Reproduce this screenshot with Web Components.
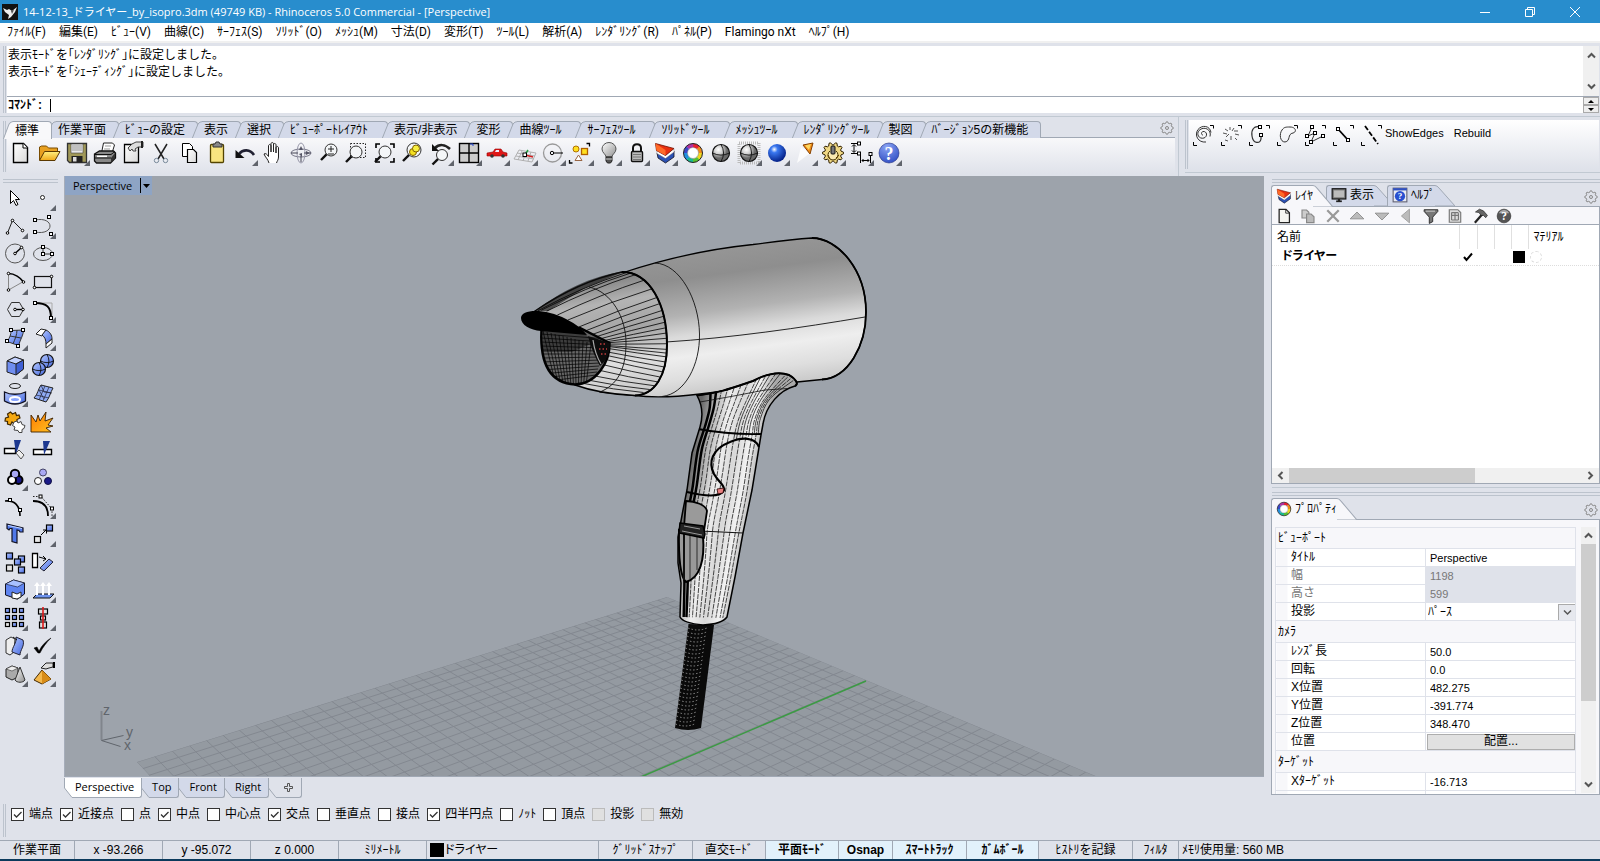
<!DOCTYPE html>
<html lang="ja">
<head>
<meta charset="utf-8">
<title>14-12-13_ドライヤー_by_isopro.3dm - Rhinoceros 5.0 Commercial</title>
<style>
  html, body { margin: 0; height: 100%; }
  body {
    --bg: #dfe2ea; --edge: #a0a8b4; --soft: #c1c9d2; --tab: #d3d9e9; --face: #f7f7fa;
    --ui: "Open Sans", "Noto Sans CJK JP", sans-serif;
    --jp: "Liberation Sans", "Noto Sans CJK JP", sans-serif;
    background: var(--bg); color: #000; font: 12px/16px "Noto Sans CJK JP", "Liberation Sans", sans-serif;
  }
</style>
</head>
<body>
<rh-app></rh-app>
<script>
const BASE = `<style>
  *, *::before, *::after { box-sizing: border-box; }
  :host { display: block; }
  button, input, select { font: inherit; color: inherit; margin: 0; padding: 0; border: 0; border-radius: 0; background: none; outline: 0; }
  button { display: inline-flex; align-items: center; justify-content: center; white-space: nowrap; }
  a { color: inherit; text-decoration: none; }
  svg { display: block; }
</style>`;
function define(name, html, ready) {
  const tpl = document.createElement('template');
  customElements.define(name, class extends HTMLElement {
    connectedCallback() {
      if (this.shadowRoot) return;
      tpl.innerHTML = BASE + (typeof html === 'function' ? html(this) : html);
      this.attachShadow({ mode: 'open' }).append(tpl.content.cloneNode(true));
      if (ready) ready(this.shadowRoot, this);
    }
  });
}

/* ---------- icons, drawn on a 28 x 28 cell ---------- */
const DEFS = `<defs>
  <linearGradient id="doc" x2="1" y2="1"><stop stop-color="#fff"/><stop offset="1" stop-color="#d8d8d8"/></linearGradient>
  <linearGradient id="gold" x2="0" y2="1"><stop stop-color="#fff080"/><stop offset="1" stop-color="#f0a818"/></linearGradient>
  <linearGradient id="blue" x2="1" y2="1"><stop stop-color="#b4c8ff"/><stop offset="1" stop-color="#4468e0"/></linearGradient>
  <linearGradient id="grey" x2="1" y2="1"><stop stop-color="#fff"/><stop offset="1" stop-color="#909090"/></linearGradient>
  <linearGradient id="fire" x2="1" y2="1"><stop stop-color="#ff7a00"/><stop offset="1" stop-color="#ffc020"/></linearGradient>
  <radialGradient id="ball" cx=".35" cy=".3"><stop stop-color="#fff"/><stop offset=".5" stop-color="#d0d0d0"/><stop offset="1" stop-color="#686868"/></radialGradient>
  <radialGradient id="bball" cx=".35" cy=".3" r=".75"><stop stop-color="#fff"/><stop offset=".25" stop-color="#3a78f0"/><stop offset="1" stop-color="#001a80"/></radialGradient>
  <radialGradient id="help" cx=".4" cy=".2" r=".9"><stop stop-color="#8aa4f4"/><stop offset="1" stop-color="#2a48c0"/></radialGradient>
</defs>`;
const sq = (x, y, f = '#fff') => `<rect x="${x - 1.5}" y="${y - 1.5}" width="3" height="3" fill="${f}" stroke="#000"/>`;
const dot = (x, y) => `<circle cx="${x}" cy="${y}" r="1.3" fill="#fff" stroke="#000"/>`;
const box = (x, y, w, f = 'url(#blue)', h = w) => `<rect x="${x}" y="${y}" width="${w}" height="${h}" fill="${f}" stroke="#000" stroke-width="1.2"/>`;
const corners = `<path d="M21 5.500h3.500v3M4.500 22v3.500h3.500" stroke="#000" fill="none"/>`;
const lens = (x, y, r) => `<path d="M${x - r * .7} ${y + r * .7}L${x - r - 4} ${y + r + 4}" stroke="#111" stroke-width="2.4"/><circle cx="${x}" cy="${y}" r="${r}" fill="#f4f6f8" stroke="#333"/>`;
const wheel = (cx, cy, r, w) => ['#e8202c', '#f08c1c', '#f0d820', '#58c030', '#18b890', '#2090e0', '#3a48c8', '#b030a0'].map((c, i) => {
  const a = i * Math.PI / 4 - 1.57, b = a + .82;
  return `<path d="M${cx + r * Math.cos(a)} ${cy + r * Math.sin(a)}A${r} ${r} 0 0 1 ${cx + r * Math.cos(b)} ${cy + r * Math.sin(b)}" fill="none" stroke="${c}" stroke-width="${w}"/>`;
}).join('') + `<circle cx="${cx}" cy="${cy}" r="${r + w / 2}" fill="none" stroke="#222"/><circle cx="${cx}" cy="${cy}" r="${r - w / 2}" fill="#fff" stroke="#555" stroke-width=".4"/>`;
const sphere = (x, y, r, f) => `<circle cx="${x}" cy="${y}" r="${r}" fill="${f}" stroke="#111" stroke-width="1.2"/><path d="M${x - r} ${y}q${r} ${r * .5} ${2 * r} 0M${x} ${y - r}q${r * .6} ${r} 0 ${2 * r}" fill="none" stroke="#111" stroke-width=".9"/>`;
const cog = (x, y, r, n, f, s) => {
  let d = '';
  for (let i = 0; i < n * 4; i++) { const a = (i - .5) * Math.PI / (n * 2), R = i % 4 < 2 ? r : r * .78; d += (i ? 'L' : 'M') + (x + R * Math.cos(a)).toFixed(1) + ' ' + (y + R * Math.sin(a)).toFixed(1); }
  return `<path d="${d}Z" fill="${f}" stroke="${s}"/>`;
};
const ICONS = {
  new: `<path d="M6.500 4.500h10l4 4v15h-14z" fill="url(#doc)" stroke="#000" stroke-width="1.400"/><path d="M16 4.500v4.500h4.500" fill="#fff" stroke="#000"/>`,
  open: `<path d="M4.500 21v-13l2-1h5l2 2h9v3" fill="#e8a020" stroke="#7a4c00"/><path d="M4.500 21.500l5-9h15.500l-5 9z" fill="url(#gold)" stroke="#5a3800"/>`,
  save: `<path d="M4.500 4.500h19v19h-17l-2-2z" fill="#a09858" stroke="#333" stroke-width="1.300"/><path d="M8 5h12v9h-12z" fill="#e8e8e8" stroke="#444" stroke-width=".6"/><path d="M9 7h10M9 9h10M9 11h10" stroke="#999"/><path d="M8.500 17h11v6.500h-11z" fill="#222"/><path d="M10 18h3.500v4.500h-3.500z" fill="#ddd"/>`,
  print: `<path d="M10.500 14l2-10h9l2 2-2.500 8z" fill="#fff" stroke="#222"/><path d="M14 7l6 0M13 10l6 0" stroke="#999"/><path d="M3.500 15l5-3h14l2 2v5l-5 5h-14l-2-2z" fill="#888" stroke="#111" stroke-width="1.300"/><path d="M4 15.500h16l4-3M4 19h16" stroke="#111" fill="none"/><path d="M6 17.300h10" stroke="#fff" stroke-width="1.500"/><path d="M20 19v4l4-4v-5z" fill="#333"/>`,
  props: `<path d="M5.500 5.500h14v18h-14z" fill="url(#doc)" stroke="#000" stroke-width="1.300"/><path d="M9 9l4-4 4-2h7v5l-5 0-3 2 1 2-3 0-1-2-2 2z" fill="#ddd" stroke="#444"/><path d="M22 2v7h2v-7z" fill="#222"/>`,
  cut: `<path d="M8 5l9 15M20 5l-9 15" stroke="#222" stroke-width="1.500"/><circle cx="9.500" cy="21.500" r="2.200" fill="none" stroke="#789"/><circle cx="18.500" cy="21.500" r="2.200" fill="none" stroke="#789"/>`,
  copy: `<path d="M7.500 4.500h7l3 3v10h-10z" fill="#fff" stroke="#000"/><path d="M12.500 10.500h6l3 3v10h-9z" fill="url(#doc)" stroke="#000" stroke-width="1.200"/>`,
  paste: `<rect x="7.500" y="5.500" width="13" height="18" rx="1" fill="#f8e480" stroke="#544400" stroke-width="1.300"/><path d="M10 8v-3h2l1-2h3l1 2h2v3z" fill="#888" stroke="#333"/>`,
  undo: `<path d="M8 15c4-5 11-5 15 1" fill="none" stroke="#223" stroke-width="2.600"/><path d="M4.500 11v8h9z" fill="#111"/>`,
  pan: `<path d="M10 24c-1-4-4-6-5-9 1.500-1 3 0 4.500 2.500V7c0-2 2.500-2 2.500 0v6-8c0-2 2.500-2 2.500 0v8-7c0-2 2.500-2 2.500 0v8-5c0-2 2.500-2 2.500 0v9c0 3-1.500 4-2 6" fill="#fff" stroke="#222"/>`,
  rotate: `<ellipse cx="14" cy="14" rx="10" ry="4" fill="none" stroke="#778"/><ellipse cx="14" cy="14" rx="4" ry="10" fill="none" stroke="#99a"/><path d="M4 14h7M17 14h7M14 17v6" stroke="#445"/><path d="M12 11l2-4 2 4zM12 15l3-1 0 4zM19 12l4 2-4 2z" fill="#556"/>`,
  zoom: lens(16, 11, 6) + `<path d="M13 10h6M16 7v6M13 15h6" stroke="#222"/>`,
  zoomwin: `<rect x="7.500" y="4.500" width="15" height="14" fill="none" stroke="#222" stroke-dasharray="1.500 1.500"/>` + lens(13, 13, 6),
  zoomext: `<path d="M5 9V5h4M19 5h4v4M23 19v4h-4M9 23H5v-4" fill="none" stroke="#000" stroke-width="1.600"/>` + lens(14, 13, 6),
  zoomsel: lens(15, 11, 7) + `<circle cx="14" cy="13" r="3.500" fill="#f4e020" stroke="#806000"/><circle cx="17" cy="9.500" r="3.500" fill="#f8f040" stroke="#806000"/>`,
  undoview: lens(15, 16, 5.5) + `<path d="M8 9c4-4 10-4 15 1" fill="none" stroke="#222" stroke-width="2.500"/><path d="M5 5v7h7z" fill="#111"/>`,
  views: `<rect x="4.500" y="4.500" width="19" height="19" fill="#ccc" stroke="#000" stroke-width="1.400"/><path d="M14 4v20M4 14h20" stroke="#000" stroke-width="1.400"/><path d="M15 5h3v2" stroke="#24c" fill="none"/>`,
  car: `<path d="M4 14l6-1 2-3h6l2 3 4 1v3H4z" fill="#e01818" stroke="#900" stroke-width=".6"/><path d="M12 13l1-2h3v2z" fill="#eef"/><circle cx="9" cy="17" r="1.800" fill="#333"/><circle cx="20" cy="17" r="1.800" fill="#333"/>`,
  cplane: `<path d="M3 20l5-9 17 3-4 9zM7 21l4-9M12 22l3-9M17 22l3-9M5 17l18 3M6 14l18 3" fill="none" stroke="#aaa" stroke-width=".9"/><path d="M14 16l8 2" stroke="#d02020" stroke-width="1.500"/><path d="M14 16l3-5" stroke="#20a040" stroke-width="1.500"/><rect x="12" y="14" width="3.500" height="3.500" fill="#fff" stroke="#000"/>`,
  circ: `<circle cx="13.500" cy="14" r="9" fill="none" stroke="#999" stroke-width="1.300"/><circle cx="13" cy="14" r="1.700" fill="none" stroke="#000"/><path d="M15 14h9" stroke="#000"/>`,
  shapes: `<circle cx="9" cy="10" r="3" fill="#ffe020" stroke="#b07000"/><rect x="14.500" y="9.500" width="6" height="6" fill="#ffe020" stroke="#b06000" stroke-width="1.300"/><path d="M11.500 16l3.500 5.500H8z" fill="#fff" stroke="#964"/><path d="M19.500 4.500h3v3M2.500 21v3h3" stroke="#000" fill="none" stroke-width="1.300"/>`,
  bulb: `<path d="M11 18c0-3-4-4-4-8a7 6.500 0 0 1 14 0c0 4-4 5-4 8z" fill="url(#grey)" stroke="#555"/><path d="M11 18h6v4l-1.500 2h-3L11 22z" fill="#555" stroke="#222"/><path d="M11 20h6" stroke="#ccc"/>`,
  lock: `<path d="M10 14V9c0-5 8-5 8 0v5" fill="none" stroke="#111" stroke-width="2"/><rect x="8.500" y="12.500" width="11" height="10" rx="1" fill="#bbb" stroke="#111" stroke-width="1.400"/><path d="M10 15.500h8M10 18h8M10 20.500h8" stroke="#777"/>`,
  layers: `<path d="M6 14l8.500 5L23 12v6l-8.500 6-7.500-5z" fill="#2c52b4" stroke="#112" stroke-width=".8"/><path d="M5.500 11.500l9 5 8.500-7v3.500l-8.500 6.500-8.500-5z" fill="#fff" stroke="#667" stroke-width=".4"/><path d="M4.500 4.500L23 9.500l-8.500 7-9-5z" fill="#e83010" stroke="#701000" stroke-width=".8"/><path d="M4.500 4.500l10 6.500v5.500l-9-5z" fill="#ff6a28"/>`,
  wheel: wheel(14, 14, 7.5, 4),
  shade: sphere(14, 14, 8.500, 'url(#ball)'),
  shadesel: `<rect x="4" y="4" width="20" height="20" fill="none" stroke="#bbb" stroke-width="3" stroke-dasharray="1 1"/>` + sphere(14, 14, 8.500, 'url(#ball)'),
  render: `<circle cx="14" cy="14" r="9" fill="url(#bball)"/>`,
  spot: `<path d="M6 24l4-16 9 6z" fill="#fff" opacity=".8"/><path d="M12 6l10-2-3 11z" fill="#f08c18" stroke="#844000"/><path d="M14 6.500l6-1.500-2 6z" fill="#ffd860"/>`,
  gear: cog(14, 14, 10.5, 10, '#f0d884', '#302000') + `<path d="M11 12a5 5 0 1 0 6 0" fill="#f8e8b0" stroke="#403000"/><rect x="12" y="7" width="4" height="8" rx="1" fill="#777" stroke="#111"/><path d="M9 16l2 4M17 19l3-3" stroke="#604000"/>`,
  dims: `<path d="M4 4.500h9M4 14.500h6M7 6v7M13.500 14v10M23.500 14v10M15 21.500h7M5 7.500l2-2 2 2M5 11.500l2 2 2-2M16.500 20l-1.500 1.500 1.500 1.500M20.500 20l1.500 1.500-1.500 1.500" fill="none" stroke="#000"/>` + sq(12, 4.5) + sq(12, 14.5) + sq(23.5, 15),
  help: `<circle cx="14" cy="14" r="10" fill="url(#help)" stroke="#1c2c80" stroke-width=".6"/><text x="14" y="20.500" text-anchor="middle" font-family="Liberation Serif" font-weight="700" font-size="18" fill="#fff">?</text>`,

  spiral: `<path d="M14 15c-2 0-2-3 0-3.500 4-.5 5 5 1 6.500-5 1.500-8-4-5-7.500 5-5 13-1 11 6M17 22c-8 1-12-7-8-12.500 4-5 12-4 13 3" fill="none" stroke="#333"/>` + corners,
  points: `<path d="M6 13l4 1M8 9l3 2M13 7v3M17 8l-2 3M21 11l-4 0M22 15l-4-1M12 14l-3 3M14 16l0 4M18 18l2 2M8 20l3 1" stroke="#555" fill="none"/>` + corners,
  ccurve: `<path d="M15 7c-6-2-9 3-8 9 1 8 8 8 9 3V15" fill="none" stroke="#333" stroke-width="1.200"/>` + sq(15, 7) + sq(16, 15) + corners,
  closed: `<path d="M17 7c6 0 7 5 3 6-6 1-2 8-8 9-5 0-6-8-3-12 2-3 4-3 8-3z" fill="none" stroke="#333"/>` + corners,
  pline: `<path d="M11 7l-4 9 7-3-4 9 12-6" fill="none" stroke="#333"/>` + sq(11, 7) + sq(6, 16) + sq(14, 13) + sq(22, 16) + sq(10, 22) + corners,
  seg: `<path d="M9 9l10 11" stroke="#000" stroke-width="1.800"/>` + sq(9, 9) + sq(19, 20) + corners,
  dash: `<path d="M8 6l13 18" stroke="#000" stroke-width="1.800" stroke-dasharray="5 2"/>` + corners,

  arrow: `<path d="M9.500 6.500v13l3-3 2.500 5 2-1-2.500-5h4z" fill="#fff" stroke="#000"/>`,
  point: `<circle cx="13.500" cy="13.500" r="2" fill="#fff" stroke="#222"/>`,
  polyline: `<path d="M6.500 21l5-12.500L21.500 18.500" fill="none" stroke="#222"/>` + dot(6.5, 21) + dot(11.5, 8.5) + dot(21.5, 18.5),
  curve: `<path d="M6 8c20-4 20 16 0 12" fill="none" stroke="#555"/>` + sq(6, 8) + sq(20, 5) + sq(6, 20) + sq(22, 22),
  circle: `<circle cx="14" cy="13.500" r="9.500" fill="none" stroke="#555"/><path d="M14 13.500l6.500-6" stroke="#000" stroke-width="1.400"/>` + dot(14, 13.5) + dot(20.5, 7.5),
  ellipse: `<ellipse cx="14" cy="14" rx="9.500" ry="6.500" fill="none" stroke="#555"/><path d="M14 7v7h9" fill="none" stroke="#333"/>` + sq(14, 7) + sq(14, 14) + sq(23, 14),
  arc: `<path d="M7.500 22V5.500M7.500 22l15-8.500" stroke="#888" fill="none"/><path d="M7.500 5.500c6 0 12 4 15 8.500" fill="none" stroke="#000" stroke-width="1.500"/>` + dot(7.5, 5.5) + dot(22.5, 14) + dot(7.5, 22),
  rect: `<rect x="5.500" y="8.500" width="17" height="11" fill="none" stroke="#111" stroke-width="1.200"/>` + dot(22.5, 8.5) + dot(5.5, 19.5),
  polygon: `<path d="M6.500 13.500l4-7h8l4 7-4 7h-8z" fill="none" stroke="#333"/><path d="M14 13.500h8" stroke="#000" stroke-width="1.400"/>` + dot(14, 13.5) + dot(22, 13.5),
  fillet: `<path d="M6 7h17v16" fill="none" stroke="#aaa"/><path d="M6 7c12 0 16 4 16 15" fill="none" stroke="#000" stroke-width="2"/>` + sq(6, 7) + sq(22, 22),
  srf: `<path d="M10 6.500L22.500 6c0 5-3 9-5 15.500L6 17.500c3-4 4-7 4-11z" fill="url(#blue)" stroke="#333"/><path d="M16 6c0 5-2 9-4 14M9 12l11 2" stroke="#333" fill="none"/>` + sq(10, 6) + sq(22, 6) + sq(6, 17) + sq(17, 22),
  sweep: `<path d="M7 10l5-5 5 1-4 6z" fill="#fff" stroke="#222"/><path d="M13 11l4-5c4 2 6 5 6 9l-6 5c0-4-1-7-4-9z" fill="url(#blue)" stroke="#222"/><path d="M17 20l6-5v4l-6 5z" fill="#fff" stroke="#222"/>`,
  cube: `<path d="M6 9l8-4 8.500 3v9L15 23l-9-3z" fill="#6f8df0" stroke="#222"/><path d="M6 9l9 3 7.500-4L14 5z" fill="#c4d2ff" stroke="#222"/><path d="M15 12l7.500-4v9L15 23z" fill="#3f5fd4" stroke="#222"/>`,
  bool: sphere(18, 9, 6.500, 'url(#blue)') + sphere(10, 17, 6.500, 'url(#blue)'),
  cyl: `<ellipse cx="14" cy="6" rx="5.500" ry="2.500" fill="none" stroke="#222"/><path d="M3.500 12c6 3 15 3 21 0v9c-6 4-15 4-21 0z" fill="url(#blue)" stroke="#112" stroke-width="1.300"/><ellipse cx="14" cy="19.500" rx="5" ry="2.500" fill="#88a4ff" stroke="#fff" stroke-width="2"/>`,
  mesh: `<path d="M12 5l12 3c-3 5-3 9-7 14l-12-4c4-4 4-9 7-13z" fill="#8fabf4" stroke="#222"/><path d="M16 6l-6 14M20 7l-6 14M10 10l12 3M7 15l13 3M12 5l3 7 8 1M10 10l5 9" stroke="#223" stroke-width=".7" fill="none"/>`,
  puzzle: `<path d="M4.500 10l3-1-1-3 3-2 2 2 3-1.500 1 3 2.500-.5 1 3-3 1.500 0 3-3 1-2-1.500-1.500 3-3-1 0-2.500-2.500-.5z" fill="#f4a810" stroke="#402800" stroke-width="1.200"/><path d="M13 14l3-1 1 2 3-1.500 1 3 3 1-1 3-2 1 0 3-3 0-1-2-4-.5 1-3-2.500-1.500z" fill="#fff" stroke="#444"/>`,
  explode: `<path d="M2 24V7l5 7 2-7 2 6 6-9-1 9 8-3-5 7 5 1-7 2 5 4z" fill="url(#fire)" stroke="#3a2000" stroke-width=".9"/>`,
  trim: `<path d="M3.500 12.500h11v5h-11z" fill="#fff" stroke="#000" stroke-width="1.400"/><path d="M13 4h7l-5 14z" fill="#1c3890"/><path d="M15 17l3-3 5 5-3 4z" fill="#eee" stroke="#555"/>`,
  split: `<path d="M4.500 13.500h18v5h-18z" fill="#fff" stroke="#000" stroke-width="1.400"/><path d="M14 5h7l-6 14z" fill="#1c3890"/>`,
  join: `<circle cx="14" cy="10" r="4" fill="#a9a9f4" stroke="#000" stroke-width="2.400"/><circle cx="17.500" cy="16" r="4" fill="#1a1a88" stroke="#000" stroke-width="2"/><circle cx="11" cy="16" r="4" fill="#fff" stroke="#000" stroke-width="2"/><circle cx="14" cy="10" r="3.200" fill="#a9a9f4"/>`,
  unjoin: `<circle cx="14" cy="8.500" r="3.500" fill="#a9a9f4" stroke="#446"/><circle cx="9" cy="17" r="3.500" fill="#fff" stroke="#222"/><circle cx="19" cy="17" r="3.500" fill="#1a1a88" stroke="#114"/>`,
  editpt: `<path d="M4 9c10-1 15 5 15 15" fill="none" stroke="#000" stroke-width="1.600"/>` + sq(9, 8) + sq(19, 18),
  ctrlpt: `<path d="M4 9c10 0 15 5 15 15" fill="none" stroke="#000" stroke-width="1.800"/><path d="M4 4.500h8L23 17v8" fill="none" stroke="#222" stroke-dasharray="1.500 1.500"/>` + sq(11.5, 4.5) + sq(23, 16.5),
  text: `<path d="M6 4l16 4v4l-3 0-1-1.500-2-.5v13l-5-1.500v-13l-2 0-1 1.500-2-1.500z" fill="#5078e8" stroke="#112" stroke-width="1.200"/><path d="M7 5.500l14 3" stroke="#c0d4ff"/>`,
  move: box(5.5, 16.500, 6, '#e8e8e8') + box(17.5, 5, 6) + `<path d="M12 15l5-5M14 10h3.500v3.500" fill="none" stroke="#000"/>`,
  group: box(5.5, 5, 6) + box(17.5, 8, 6) + box(13.5, 11, 6) + box(5.5, 17, 6, '#e4e4e4') + box(17.5, 19, 6),
  orient: `<path d="M3.500 5.500h5v14h-5z" fill="#fff" stroke="#000" stroke-width="1.300"/><path d="M10 9l7 2M14 8l3 3-3 2" fill="none" stroke="#000"/><path d="M11 20l9-9 4 3-9 9z" fill="url(#blue)" stroke="#223"/>`,
  solid: `<path d="M4.500 8l8-4 11 3v11l-7 5-12-4z" fill="#5f84f0" stroke="#112"/><path d="M4.500 8l12 3 7-4-11-3z" fill="#a8c0ff" stroke="#112" stroke-width=".6"/><path d="M11 22v-6l5 2 4-2v5l-4 2z" fill="#fff" stroke="#222"/>`,
  normals: `<path d="M4 22l4-4h17l-4 4z" fill="#6f95f0" stroke="#111"/><path d="M8 19V9M14 19V9M20 19V9" stroke="#fff" stroke-width="2"/><path d="M5 10l3-4 3 4zM11 10l3-4 3 4zM17 10l3-4 3 4z" fill="#fff"/>`,
  array: [0, 1, 2].map(i => [0, 1, 2].map(j => box(4.5 + 7 * i, 4.5 + 7 * j, 4, i == 0 && j == 2 ? '#e4e4e4' : 'url(#blue)')).join('')).join(''),
  align: box(9.5, 5, 9, '#ddd', 5) + box(11.5, 12, 5, '#ddd', 4) + box(10.5, 18, 7, '#ddd', 6) + `<path d="M14 3v22" stroke="#e01818" stroke-width="1.600"/>`,
  bend: `<path d="M5 8l5-3 4 2-1 13-4 3-4-2z" fill="#eee" stroke="#333"/><path d="M15 5l7 3c2 6-3 10-3 15l-8-3c0-5 5-9 4-15z" fill="url(#blue)" stroke="#223"/><path d="M12 5l4 3" stroke="#111"/>`,
  check: `<path d="M5 16l3-1 2 4c3-6 7-10 12-13-5 5-8 9-11 15h-2z" fill="#000" stroke="#000" stroke-width=".5"/>`,
  prims: `<path d="M5 9l6-3 6 2v9l-6 3-6-3z" fill="#aaa" stroke="#222"/><path d="M5 9l6 2 6-3-6-2z" fill="#eee" stroke="#333" stroke-width=".6"/><path d="M19 7l5 13c-2 3-8 3-10 0z" fill="url(#grey)" stroke="#333"/>`,
  pyramid: `<path d="M13 10l9 9-9 5-8-4z" fill="#f4b84c" stroke="#442800"/><path d="M13 10v14l9-5z" fill="#d88c18"/><path d="M12 8l5-5h7v4l-4 1-3 1-5-1z" fill="#ddd" stroke="#222"/><path d="M24 2v6h2V2z" fill="#000"/>`,

  delx: `<path d="M4 4l20 20M24 4L4 24" stroke="#999" stroke-width="4"/>`,
  newg: `<path d="M5.500 2.500h12l6 6v17h-18z" fill="#f4f4f0" stroke="#222" stroke-width="2.200"/><path d="M17 3v6h6" fill="none" stroke="#222" stroke-width="1.500"/>`,
  copyg: `<path d="M3.500 3.500h8l4 4v10h-12z" fill="#ccc" stroke="#888" stroke-width="2"/><path d="M11.500 10.500h8l5 5v10h-13z" fill="#bbb" stroke="#888" stroke-width="2"/>`,
  up: `<path d="M2 19L14 7l12 12z" fill="#bbb" stroke="#888" stroke-width="1.500"/>`,
  down: `<path d="M2 9h24L14 21z" fill="#bbb" stroke="#888" stroke-width="1.500"/>`,
  left: `<path d="M20 2v24L6 14z" fill="#bbb" stroke="#999" stroke-width="1.500"/>`,
  filter: `<path d="M2 3h24v3l-9 10v8l-6 3V16L2 6z" fill="#777" stroke="#222" stroke-width="1.500"/><path d="M5 5.500h16" stroke="#ddd" stroke-width="1.500"/>`,
  sheet: `<path d="M4 3h15l5 5v17H4zM8 8v13M14 8v13M20 9v12M8 8h12M8 13h12M8 21h12" fill="#ddd" stroke="#777" stroke-width="2"/>`,
  hammer: `<path d="M5 26L18 11" stroke="#222" stroke-width="4"/><path d="M6 7l7-5 7 3 7 8-3 4-4-4-4 0-4-5z" fill="#666" stroke="#111"/>`,
  helpg: `<circle cx="14" cy="14" r="12" fill="#555" stroke="#222"/><path d="M5 9a10 10 0 0 1 18 0z" fill="#aaa"/><text x="14" y="21" text-anchor="middle" font-family="Liberation Serif" font-weight="700" font-size="20" fill="#fff">?</text>`,
  screen: `<rect x="2" y="3" width="24" height="18" fill="#777" stroke="#111" stroke-width="2"/><rect x="5" y="6" width="18" height="12" fill="#bbb"/><path d="M9 25h10" stroke="#222" stroke-width="3"/><path d="M14 21v4" stroke="#222" stroke-width="4"/>`,
  book: `<rect x="2" y="2" width="24" height="24" fill="#e8ecf4" stroke="#667" stroke-width="2"/><path d="M2 2h24v4H2z" fill="#3050c0"/><circle cx="14" cy="16" r="9" fill="#2850d0"/><text x="14" y="21.500" text-anchor="middle" font-family="Liberation Serif" font-weight="700" font-size="16" fill="#fff">?</text>`,
  cog: cog(14, 14, 12.5, 8, 'none', '#888').replace('stroke=', 'stroke-width="2" stroke-linejoin="round" stroke=') + `<circle cx="14" cy="14" r="3" fill="none" stroke="#888" stroke-width="2"/>`
};
define('rh-icon', el => `<style>:host{flex:none;width:28px;height:28px} svg{width:100%;height:100%}</style>
  <svg viewBox="0 0 28 28" aria-hidden="true">${DEFS}${ICONS[el.getAttribute('name')] || ''}${el.hasAttribute('more') ? '<path d="M27 21v6h-6z" fill="#60646c"/>' : ''}</svg>`);

/* grips, either vertical or horizontal */
define('rh-grip', `<style>:host{flex:none;width:3px;border:solid #bcc3cd;border-width:0 1px} :host([flat]){width:auto;height:4px;border-width:1px 0}</style>`);

define('rh-titlebar', `<style>
  :host{display:flex;height:23px;align-items:center;background:#288dcd;color:#fff;font:11px/16px var(--ui);padding-left:2px}
  h1{flex:1;margin:0 0 0 5px;font:inherit;white-space:nowrap} button{width:45px;height:20px} .logo{width:16px;height:16px}
  button:last-child{margin-right:3px}
  </style>
  <svg class="logo" viewBox="0 0 16 16"><path d="M0 0h16v16H0z" fill="#111"/><path d="M1 4l4 2 2-1 3 2 5-4-2 5-4 5-3 2 1-4-4-3z" fill="#eee"/><path d="M9 7l3-1-2 4z" fill="#555"/></svg>
  <h1>14-12-13_ドライヤー_by_isopro.3dm (49749 KB) - Rhinoceros 5.0 Commercial - [Perspective]</h1>
  <button aria-label="最小化"><svg width="10" height="10"><path d="M0 5.500h10" stroke="#fff"/></svg></button>
  <button aria-label="元に戻す"><svg width="10" height="10" fill="none" stroke="#fff"><path d="M.5 2.500h7v7h-7zM2.500 2V.5h7v7H8"/></svg></button>
  <button aria-label="閉じる"><svg width="10" height="10"><path d="M0 0l10 10M10 0L0 10" stroke="#fff"/></svg></button>`);

define('rh-menubar', () => `<style>
  :host{background:#fff;border-bottom:2px solid #f0f0f0;font:12px/18px Roboto,"Noto Sans CJK JP",sans-serif}
  nav{display:flex;gap:13px;height:18px;padding:1px 0 0 7px;white-space:nowrap;line-height:17px}</style>
  <nav>${['ﾌｧｲﾙ(F)', '編集(E)', 'ﾋﾞｭｰ(V)', '曲線(C)', 'ｻｰﾌｪｽ(S)', 'ｿﾘｯﾄﾞ(O)', 'ﾒｯｼｭ(M)', '寸法(D)', '変形(T)', 'ﾂｰﾙ(L)', '解析(A)', 'ﾚﾝﾀﾞﾘﾝｸﾞ(R)', 'ﾊﾟﾈﾙ(P)', 'Flamingo nXt', 'ﾍﾙﾌﾟ(H)'].map(t => `<a href="#">${t}</a>`).join('')}</nav>`);

const chev = d => `<svg width="9" height="9" fill="none" stroke="#555" stroke-width="2"><path d="${d}"/></svg>`;
const UP = chev('M1 6.5l3.500-3.500L8 6.500'), DOWN = chev('M1 2.500L4.500 6L8 2.500'), LEFT = chev('M6.500 1L3 4.500L6.500 8'), RIGHT = chev('M2.500 1L6 4.500L2.500 8');

define('rh-command', `<style>
  :host{display:flex;gap:1px;padding:3px 1px 3px 3px;border-bottom:1px solid var(--soft);font-family:var(--jp)}
  .box{flex:1;background:#fff;display:grid;grid-template-columns:1fr 16px;grid-template-rows:50px 17px}
  .log{padding:1px 0 0 1px;line-height:17px;white-space:nowrap} .log p{margin:0}
  .bar{background:#f0f0f0;display:flex;flex-direction:column;justify-content:space-between;align-items:center;padding:5px 0}
  .in{display:flex;align-items:center;border-top:1px solid var(--edge);padding-left:1px} label{font-weight:700;line-height:16px}
  .caret{width:1px;height:13px;background:#000;margin-left:8px} input{flex:1}
  .spin{border-top:1px solid var(--edge);display:flex;flex-direction:column} .spin button{flex:1;border:1px solid #aaa;background:#eee}
  </style><rh-grip></rh-grip>
  <div class="box"><div class="log"><p>表示ﾓｰﾄﾞを｢ﾚﾝﾀﾞﾘﾝｸﾞ｣に設定しました。</p><p>表示ﾓｰﾄﾞを｢ｼｪｰﾃﾞｨﾝｸﾞ｣に設定しました。</p></div>
  <div class="bar"><button aria-label="上へ">${UP}</button><button aria-label="下へ">${DOWN}</button></div>
  <div class="in"><label for="c">ｺﾏﾝﾄﾞ:</label><span class="caret"></span><input id="c"></div>
  <div class="spin"><button aria-label="前"><svg width="6" height="3"><path d="M0 3l3-3 3 3z"/></svg></button><button aria-label="次"><svg width="6" height="3"><path d="M0 0l3 3 3-3z"/></svg></button></div></div>`);

define('rh-tab', `<style>
  :host{display:flex;height:17px;margin-left:-6px;flex:none} svg{width:10px;height:17px}
  button{height:17px;padding:0 12px 0 2px;background:var(--tab);border:solid var(--edge);border-width:1px 1px 0 0;border-radius:0 4px 0 0;line-height:16px;font-family:var(--jp)}
  path{fill:var(--tab);stroke:var(--edge)} :host([wide]) button{padding:0 19px 0 2px}
  :host([on]){height:18px;margin-left:-4px;z-index:1} :host([on]) button{height:18px;background:#f8f8fa} :host([on]) path{fill:#f8f8fa} :host([on]) svg{height:18px}
  </style><svg viewBox="0 0 10 17" preserveAspectRatio="none"><path d="M0 18L6 3Q7.500 .5 11 .5V18"/></svg><button role="tab"><slot></slot></button>`);

const TOP = 'new open save+ print props cut copy paste undo+ pan rotate zoom zoomwin zoomext zoomsel undoview+ views+ car+ cplane+ circ+ shapes+ bulb+ lock+ layers+ wheel+ shade shadesel+ render+ spot+ gear+ dims+ help+'.split(' ');
const iconBtn = n => `<button aria-label="${n.replace('+', '')}"><rh-icon name="${n.replace('+', '')}"${n.endsWith('+') ? ' more' : ''}></rh-icon></button>`;
define('rh-toolbars', () => `<style>
  :host{display:flex;height:59px}
  .main{flex:1;display:flex;gap:1px;padding:4px 3px 4px 3px;border-right:1px solid var(--soft);margin-right:6px}
  .col{flex:1;min-width:0} .tabs{display:flex;height:17px;border-bottom:1px solid var(--edge);position:relative}
  .tabs rh-icon{width:14px;height:14px;margin:0 1px 0 auto}
  .tools{display:flex;align-items:flex-start;height:36px;background:linear-gradient(#f8f8fa,#dfe2ea);padding-top:1px}
  .side{flex:0 0 415px;display:flex;gap:1px;padding:3px 1px 3px 0;border-bottom:1px solid var(--soft);margin-bottom:3px}
  .side div{flex:1;display:flex;align-items:flex-start;background:linear-gradient(#fff,#dfe2ea)}
  .side .t{height:26px;font:11px/16px var(--jp);margin-right:10px}
  </style>
  <div class="main"><rh-grip></rh-grip><div class="col"><div class="tabs" role="tablist"><rh-tab on>標準</rh-tab>${['作業平面', 'ﾋﾞｭｰの設定', '表示', '選択', '+ﾋﾞｭｰﾎﾟｰﾄﾚｲｱｳﾄ', '表示/非表示', '変形', '+曲線ﾂｰﾙ', '+ｻｰﾌｪｽﾂｰﾙ', '+ｿﾘｯﾄﾞﾂｰﾙ', '+ﾒｯｼｭﾂｰﾙ', 'ﾚﾝﾀﾞﾘﾝｸﾞﾂｰﾙ', '製図', 'ﾊﾞｰｼﾞｮﾝ5の新機能'].map(t => `<rh-tab${t[0] === '+' ? ' wide' : ''}>${t.replace('+', '')}</rh-tab>`).join('')}<rh-icon name="cog"></rh-icon></div>
  <div class="tools">${TOP.map(iconBtn).join('')}</div></div></div>
  <div class="side"><rh-grip></rh-grip><div>${'spiral points ccurve closed pline seg dash'.split(' ').map(iconBtn).join('')}<button class="t">ShowEdges</button><button class="t">Rebuild</button></div></div>`);

define('rh-sidetools', () => `<style>:host{flex:0 0 64px;padding:3px 6px 0 3px} .g{display:grid;grid-template-columns:28px 28px;margin:1px 0 0 -2px}</style>
  <rh-grip flat></rh-grip><div class="g">${'arrow point+ polyline+ curve+ circle+ ellipse+ arc+ rect+ polygon+ fillet+ srf+ sweep+ cube+ bool+ cyl+ mesh+ puzzle explode trim split join+ unjoin editpt ctrlpt+ text move+ group orient solid+ normals+ array+ align+ bend+ check+ prims+ pyramid+'.split(' ').map(iconBtn).join('')}</div>`);

/* ---------- the shaded model ---------- */
function floor() {
  const V1 = [2161, 132], V2 = [-445, 132], A = [137, 762], B = [667, 597];
  let d = '';
  for (let i = 0; i <= 40; i++) {
    const x = V1[0] - 2024 / (1 + .355 * i / 40), y = A[1] + (x - A[0]) * (B[1] - A[1]) / (B[0] - A[0]);
    d += `M${x.toFixed(1)} ${y.toFixed(1)}L${(x + (x - V2[0]) * 2).toFixed(1)} ${(y + (y - V2[1]) * 2).toFixed(1)}`;
    const u = V2[0] + 1112 / (1 - .0076 * i), v = B[1] + (u - B[0]) * .418;
    d += `M${u.toFixed(1)} ${v.toFixed(1)}L${(u + (u - V1[0]) * 2).toFixed(1)} ${(v + (v - V1[1]) * 2).toFixed(1)}`;
  }
  return `<clipPath id="fl"><path d="M137 762L667 597L1153 800L545 1203Z"/></clipPath><g clip-path="url(#fl)"><path d="M137 762L667 597L1153 800L545 1203Z" fill="#949aa1"/><path d="${d}" stroke="#838890" fill="none"/></g><path d="M642 776.500L866 681" stroke="#3c9a44" stroke-width="1.500"/>`;
}
const lerp = (a, b, t) => a + (b - a) * t;
const at = (pts, t) => { const s = Math.min(t, .9999) * (pts.length - 1), i = Math.floor(s), f = s - i; return [lerp(pts[i][0], pts[i + 1][0], f), lerp(pts[i][1], pts[i + 1][1], f)]; };
/* smooth curve through points */
const smooth = p => { let d = `M${p[0]}`; for (let i = 0; i < p.length - 1; i++) { const a = p[i - 1] || p[i], b = p[i], c = p[i + 1], e = p[i + 2] || c; d += `C${b[0] + (c[0] - a[0]) / 6} ${b[1] + (c[1] - a[1]) / 6} ${c[0] - (e[0] - b[0]) / 6} ${c[1] - (e[1] - b[1]) / 6} ${c}`; } return d; };
function dryer() {
  const lipEdge = [[535, 311], [543, 310], [555, 314], [566, 319], [580, 328], [590, 336], [600, 341], [609, 343], [610, 347], [608, 356], [603, 366], [595, 377], [586, 383], [575, 385]];
  const ring = [[622, 272], [634, 274], [646, 281], [656, 293], [662, 307], [666, 325], [667, 341], [666, 358], [662, 373], [656, 384], [648, 391], [635, 395.5]];
  let nl = '';
  for (const t of [.03, .06, .1, .17, .24, .3, .34, .38, .41, .44, .47, .5, .53, .56, .59, .61, .63, .66, .69, .72, .76, .8, .84, .89, .94]) {
    const a = at(lipEdge, t), b = at(ring, t), m = [lerp(a[0], b[0], .5), lerp(a[1], b[1], .5) - (t < .5 ? 5 * (.5 - t) * 2 : -4 * (t - .5))];
    nl += `M${a}Q${m} ${b}`;
  }
  /* handle edges, sampled from the flare downwards */
  const L = [[697, 395.5], [704, 410], [700, 427], [692, 453], [687, 490], [683, 510], [678, 537], [678, 563], [680, 583], [680, 617]];
  const R = [[797, 383], [773, 398], [763, 418], [761, 433], [757, 455], [752, 489], [747, 515], [743, 533], [735, 575], [726, 618]];
  const rib = f => [[lerp(703, 797, f), lerp(395, 383, f) - 15 * Math.sin(Math.PI * Math.pow(f, 1.6))]].concat(L.slice(1).map((l, i) => [lerp(l[0], R[i + 1][0], f), lerp(l[1], R[i + 1][1], f)]));
  const hl = [.2, .27, .35, .43, .51, .6, .69, .78, .87, .93].map(f => smooth(rib(f))).join('');
  const hd = smooth(rib(.08)) + smooth(rib(.14));
  const fl = [.64, .73, .82, .9, .96].map(f => smooth(rib(f).slice(0, 4))).join('');
  let coil = '';
  for (let y = 628; y < 728; y += 4) { const x = 697 - (y - 628) * .13; coil += `M${x - 9} ${y}q10 4 19 0`; }
  let mesh = '';
  for (let i = 0; i < 13; i++) mesh += `M${543 + i * 4} ${331 + i}L${556 + i * 2.5} 386M541 ${334 + i * 4}L${608 - i} ${339 + i * 3}`;
  const mouth = 'M541.500 330C540 360 548 383 575 384.500C596 384 610 362 609.500 343L580 328Z';
  const handle = 'M697 395.500C720 393 735 387 753 381C768 373 779 371 789 375C796 379 799 384 795 386C780 390 766 405 763 424L761 435L752 490L743 533L735 577L727 617Q722 624 703 625Q683 623 680 617L681 583L678 563L678 537L683 510L687 490L692 453L700 427Q705 410 697 395.500Z';
  return `<defs>
    <linearGradient id="bd" gradientUnits="userSpaceOnUse" x1="740" y1="244" x2="760" y2="392"><stop stop-color="#969696"/><stop offset=".18" stop-color="#8e8e8e"/><stop offset=".42" stop-color="#b2b2b2"/><stop offset=".56" stop-color="#dadada"/><stop offset=".7" stop-color="#eee"/><stop offset=".85" stop-color="#dedede"/><stop offset="1" stop-color="#c4c4c4"/></linearGradient>
    <linearGradient id="nz" gradientUnits="userSpaceOnUse" x1="590" y1="275" x2="610" y2="395"><stop stop-color="#777"/><stop offset=".25" stop-color="#b4b4b4"/><stop offset=".5" stop-color="#a4a4a4"/><stop offset=".75" stop-color="#e0e0e0"/><stop offset="1" stop-color="#ccc"/></linearGradient>
    <linearGradient id="hd" gradientUnits="userSpaceOnUse" x1="684" y1="500" x2="752" y2="512"><stop stop-color="#666"/><stop offset=".2" stop-color="#b4b4b4"/><stop offset=".4" stop-color="#eee"/><stop offset=".6" stop-color="#d8d8d8"/><stop offset=".8" stop-color="#f2f2f2"/><stop offset="1" stop-color="#aaa"/></linearGradient></defs>
  <path d="M688.500 624L714 625L701 728Q688 732 675 728Z" fill="#0a0a0a"/><path d="${coil}" stroke="#aaa" stroke-width=".8" fill="none" stroke-dasharray="1.500 2"/>
  <path d="M622 273C655 262 700 250 753 244.500Q790 239.500 812 238C838 238 866 270 866 312C866 346 848 378 822 379.500L797 382L700 394Q660 399 635 395.500L600 392Z" fill="url(#bd)" stroke="#000" stroke-width="1.300"/>
  <path d="M812 238C838 238 866 270 866 312C866 346 848 378 822 379.500" fill="none" stroke="#000" stroke-width="1.800"/>
  <path d="M655 263C680 264 699 300 699.500 334C700 365 685 394 662 396.500M666 342C730 338 800 328 865 317" fill="none" stroke="#111" stroke-width=".9"/>
  <path d="M535 311C560 294 590 279 622 272C650 272 667 305 667 345C667 375 655 395 635 395.500Q600 394 575 385L560 340Z" fill="url(#nz)" stroke="#000" stroke-width="1.400"/>
  <path d="M535 311C560 292 590 276 625 271L585 288L548 311Z" fill="#111" opacity=".6"/>
  <path d="${nl}" fill="none" stroke="#000" stroke-width=".8"/>
  <path d="M622 272C650 272 667 305 667 345C667 375 655 395 635 395.500" fill="none" stroke="#000" stroke-width="2"/>
  <path d="M589 287C612 292 626 318 626 343C626 370 617 385 600 392" fill="none" stroke="#111" stroke-width=".9"/>
  <clipPath id="mc"><path d="${mouth}"/></clipPath><path d="${mouth}" fill="#666"/>
  <path d="${mesh}" stroke="#000" stroke-width=".7" fill="none" clip-path="url(#mc)"/><path d="M543 330L580 330L595 342L572 352L543 352Z" fill="#000" opacity=".4"/>
  <path d="${mouth}" fill="none" stroke="#000" stroke-width="2.500"/>
  <path d="M588 336L610 343Q610 358 600 366Q592 352 588 336Z" fill="#0c0c0c"/><path d="M593 340q2 14 8 24" stroke="#aaa" fill="none" stroke-width="1.200"/><path d="M600 344h6M599 349h8M601 354h5" stroke="#c03c3c" stroke-width="1.300" stroke-dasharray="1.500 2"/>
  <path d="M521 318C521 309 545 308 566 319Q580 326 587 335L541 331C530 330 521 325 521 318Z" fill="#000"/>
  <path d="${handle}" fill="url(#hd)" stroke="#000" stroke-width="1.500"/>
  <clipPath id="hc"><path d="${handle}"/></clipPath><g clip-path="url(#hc)" fill="none"><path d="${hl}" stroke="#000" stroke-width=".7" stroke-dasharray="5 1"/><path d="${fl}" stroke="#000" stroke-width=".7"/><path d="${hd}" stroke="#000" stroke-width="2.500"/><path d="M700 402Q735 396 765 390L795 388" stroke="#111" stroke-width=".8"/>
  <path d="M698 429Q730 435 762 434" stroke="#000" stroke-width="1.800"/><path d="M700 531L743 533" stroke="#111"/></g>
  <path d="M697 395.500C720 393 735 387 753 381C768 373 779 371 789 375C796 379 799 384 795 386" fill="none" stroke="#000" stroke-width="2"/>
  <path d="M759 447C755 437 742 437 730 442C712 449 708 462 714 474C719 483 725 485 724 490C721 498 704 496 687 492" fill="none" stroke="#000" stroke-width="2.200"/>
  <path d="M717 489l7-1-1 5-5 1z" fill="#e88080" stroke="#200" stroke-width=".8"/>
  <path d="M686 501C695 501 706 505 707 511L704 531L684 527Z" fill="#9a9a9a" stroke="#000" stroke-width="1.800"/>
  <path d="M679 530L703 536C705 560 700 578 686 582Q678 575 679 530Z" fill="#999" stroke="#000" stroke-width="2"/><path d="M684 532V580" stroke="#111" stroke-width="2"/><path d="M690 535V579M697 537V570" stroke="#111" stroke-width=".8"/>
  <path d="M680 523L703 526L705 534L704 538L679 533Z" fill="#222" stroke="#000" stroke-width="1.500"/><path d="M684 526L700 529M682 531L702 535" stroke="#999"/>`;
}
define('rh-viewport', () => `<style>
  :host{display:grid;flex:1;min-height:0;background:#9da3ab;border-bottom:1px solid var(--edge);overflow:hidden;border-left:1px solid #a6adba}
  svg.m{grid-area:1/1;width:100%;height:100%;min-height:0}
  .t{grid-area:1/1;justify-self:start;align-self:start;display:flex;align-items:center;height:19px;background:#8ea4c4;font:11px/16px var(--ui);padding:0 2px 0 8px}
  .t span{border-left:1px solid #000;margin-left:8px;height:15px;display:flex;align-items:center;padding-left:2px}
  text{font:14px "Liberation Sans";fill:#60656c}
  </style><svg class="m" viewBox="65 176 1200 600" preserveAspectRatio="xMinYMid slice" role="img" aria-label="Perspective">${floor()}
  <g stroke="#60656c" fill="none"><path d="M101.500 711v29" stroke-width="2" stroke="#80858c"/><path d="M101.500 740.500l22-5M101.500 740.500l19 6"/></g><text x="103" y="715">z</text><text x="126" y="737">y</text><text x="124" y="750">x</text>
  ${dryer()}</svg>
  <button class="t">Perspective<span><svg width="7" height="4"><path d="M0 0h7L3.500 4z"/></svg></span></button>`);

define('rh-viewtab', `<style>
  :host{display:flex;height:20px;margin-right:-1px} svg{width:8px;height:20px}
  button{padding:0 7px 2px 3px;background:var(--c,var(--tab));border:solid var(--edge);border-width:0 1px 1px 0;border-radius:0 0 3px 0;font:11px/16px var(--ui)} path{fill:var(--c,var(--tab));stroke:var(--edge)}
  :host([on]){--c:#fff} :host([plus]){--c:var(--bg)} :host([plus]) button{padding:0 8px}
  </style><svg viewBox="0 0 8 20"><path d="M.5-1V10L8 19.500H9V-1"/></svg><button role="tab"><slot></slot></button>`);
define('rh-center', `<style>:host{display:flex;flex-direction:column;flex:1;min-width:0} .v{display:flex;height:23px;padding-top:1px}</style>
  <rh-viewport></rh-viewport><div class="v" role="tablist"><rh-viewtab on>Perspective</rh-viewtab><rh-viewtab>Top</rh-viewtab><rh-viewtab>Front</rh-viewtab><rh-viewtab>Right</rh-viewtab><rh-viewtab plus><svg width="9" height="9" fill="none" stroke="#555"><path d="M3.500.5h2v3h3v2h-3v3h-2v-3h-3v-2h3z"/></svg></rh-viewtab></div>`);

/* ---------- docked panels ---------- */
define('rh-panel', `<style>
  :host{display:flex;flex-direction:column;min-height:0} .top{display:flex;height:21px;margin-top:2px;align-items:flex-end}
  .top rh-icon{width:14px;height:14px;margin:0 2px 2px auto} .body{flex:1;min-height:0;display:flex;flex-direction:column;border:1px solid var(--edge);margin:0 0 0 -1px;background:var(--face);overflow:hidden}
  </style><rh-grip flat></rh-grip><div class="top" role="tablist"><slot name="tab"></slot><rh-icon name="cog"></rh-icon></div><div class="body"><slot></slot></div>`);
define('rh-ptab', el => `<style>
  :host{display:flex;height:21px;--c:var(--tab);margin-right:-6px;margin-left:-1px;position:relative} :host([on]){--c:var(--face);height:22px;margin-bottom:-1px;z-index:2}
  button{gap:3px;padding:0 0 2px 4px;background:var(--c);border:solid var(--edge);border-width:1px 0 0 1px;border-radius:3px 0 0 0;font-family:var(--jp)}
  rh-icon{width:16px;height:16px} rh-icon[name=layers],rh-icon[name=wheel]{width:20px;height:20px;margin:0 -2px} svg{width:20px;height:100%} path{fill:var(--c);stroke:var(--edge)}
  </style><button role="tab"><rh-icon name="${el.getAttribute('icon')}"></rh-icon><slot></slot></button><svg viewBox="0 0 20 21" preserveAspectRatio="none"><path d="M-1 .5H0Q2 .5 4 3L20 21H-1"/></svg>`);

define('rh-layers', () => `<style>
  :host{display:flex;flex-direction:column;flex:1;min-height:0;background:#fff;font-family:var(--jp)}
  .bar{display:flex;justify-content:space-between;align-items:center;height:17px;width:242px;padding:0 2px 0 4px} .w{background:var(--face);border-bottom:1px solid var(--edge)}
  .bar rh-icon{width:16px;height:16px}
  .l{flex:1} table{width:100%;border-collapse:collapse;table-layout:fixed} th{height:24px;font-weight:400;text-align:left;padding:0 0 0 5px;border-left:1px solid #e0e0e0} th:first-child{border:0}
  td{height:16px;padding:0;border-bottom:1px dotted #ddd;font-weight:700;line-height:15px} td:first-child{padding-left:10px;font-feature-settings:"palt"}
  .sw{display:block;width:12px;height:12px;background:#000;margin-left:2px} .mat{display:block;width:12px;height:12px;border:1px dashed #ddd;border-radius:50%;margin-left:2px}
  .sb{display:flex;height:15px;background:#f0f0f0} .sb button{width:17px} .sb i{flex:0 1 186px;background:#cdcdcd} .sb span{flex:1}
  </style>
  <div class="w"><div class="bar">${'newg copyg delx up down left filter sheet hammer helpg'.split(' ').map(iconBtn).join('')}</div></div>
  <div class="l"><table><colgroup><col><col style="width:18px"><col style="width:17px"><col style="width:17px"><col style="width:17px"><col style="width:71px"></colgroup>
  <tr><th>名前</th><th></th><th></th><th></th><th></th><th>ﾏﾃﾘｱﾙ</th></tr>
  <tr><td>ドライヤー</td><td><svg width="18" height="12" fill="none" stroke="#000" stroke-width="2"><path d="M5 6l2.500 3L13 2.500"/></svg></td><td></td><td></td><td><span class="sw"></span></td><td><span class="mat"></span></td></tr></table></div>
  <div class="sb"><button aria-label="左">${LEFT}</button><i></i><span></span><button aria-label="右">${RIGHT}</button></div>`);

const PROPS = [['ﾋﾞｭｰﾎﾟｰﾄ'], ['ﾀｲﾄﾙ', 'Perspective'], ['幅', '1198', 'off'], ['高さ', '599', 'off'], ['投影', 'ﾊﾟｰｽ', 'sel'], ['ｶﾒﾗ'], ['ﾚﾝｽﾞ長', '50.0'], ['回転', '0.0'], ['X位置', '482.275'], ['Y位置', '-391.774'], ['Z位置', '348.470'], ['位置', '配置...', 'btn'], ['ﾀｰｹﾞｯﾄ'], ['Xﾀｰｹﾞｯﾄ', '-16.713']];
define('rh-props', () => `<style>
  :host{display:flex;flex:1;min-height:0;padding:7px 3px 0 3px;gap:5px;font-family:var(--jp)} .s{flex:1;overflow:hidden;min-height:0}
  table{width:100%;border-collapse:collapse;table-layout:fixed;border:1px solid #dfe2ea} th{height:22px;text-align:left;font-weight:400;padding:0 0 0 2px} .s tr:first-child th{height:21px}
  td{height:18px;border:1px solid #dfe2ea;padding:0;background:#fff;line-height:15px;vertical-align:middle} td:first-child{background:linear-gradient(90deg,var(--face) 11px,#fff 11px);padding-left:15px}
  td input,td select{display:block;width:100%;height:16px;padding-left:4px;font-size:11px;line-height:16px} td select{font-size:12px;appearance:none;flex:1;padding-left:2px}
  .off td{color:#777} .off td:last-child{background:#dfe2ea} .c{display:flex} .c span{width:17px;height:16px;background:#e6e8ee;border:solid #aaa;border-width:1px 0 0 1px;display:flex;align-items:center;justify-content:center}
  td button{width:calc(100% - 1px);margin-left:1px;height:16px;background:#e1e1e1;border:1px solid #adadad;display:flex}
  .v{width:15px;background:#f0f0f0;display:flex;flex-direction:column;margin-bottom:1px} .v button{height:17px} .v i{flex:0 1 157px;background:#cdcdcd} .v span{flex:1}
  </style><div class="s"><table><colgroup><col><col></colgroup>${PROPS.map(([k, v, t], i) => v === undefined ? `<tr><th colspan="2">${k}</th></tr>` :
    `<tr class="${t || ''}"><td><label for="p${i}">${k}</label></td><td>${t === 'sel' ? `<div class="c"><select id="p${i}"><option>${v}</option></select><span>${DOWN.replace('"2"', '"1.500"')}</span></div>` : t === 'btn' ? `<button id="p${i}">${v}</button>` : `<input id="p${i}" value="${v}"${t ? ' readonly' : ''}>`}</td></tr>`).join('')}<tr><td></td><td></td></tr></table></div>
  <div class="v"><button aria-label="上">${UP}</button><i></i><span></span><button aria-label="下">${DOWN}</button></div>`);

define('rh-dock', `<style>:host{display:flex;flex-direction:column;flex:0 0 336px;padding:3px 0 5px 8px} .a{flex:1;min-height:200px} .b{flex:0 0 303px} hr{border:0;border-top:1px solid var(--soft);margin:3px 0 4px;width:100%}
  </style><rh-panel class="a"><rh-ptab slot="tab" icon="layers" on>ﾚｲﾔ</rh-ptab><rh-ptab slot="tab" icon="screen">表示</rh-ptab><rh-ptab slot="tab" icon="book">ﾍﾙﾌﾟ</rh-ptab><rh-layers></rh-layers></rh-panel><hr>
  <rh-panel class="b"><rh-ptab slot="tab" icon="wheel" on>ﾌﾟﾛﾊﾟﾃｨ</rh-ptab><rh-props></rh-props></rh-panel>`);

define('rh-osnap', () => `<style>
  :host{display:flex;height:40px;padding:4px 0 3px 3px;font-family:var(--jp)} form{display:flex;gap:7px;padding-left:5px;height:20px;align-items:center} label{display:flex;align-items:center;gap:5px;white-space:nowrap;line-height:18px}
  input{appearance:none;width:13px;height:13px;border:1px solid #333;background:#fff} input:disabled{background:#e0e0e0;border-color:#bbb}
  input:checked{background:#fff url('data:image/svg+xml,<svg xmlns="http://www.w3.org/2000/svg" width="11" height="11"><path d="M2 5.500l2.500 2.500L9.500 3" fill="none" stroke="%23333" stroke-width="1.300"/></svg>')}
  </style><rh-grip></rh-grip><form>${'端点+ 近接点+ 点 中点+ 中心点 交点+ 垂直点 接点 四半円点+ ﾉｯﾄ 頂点 投影- 無効-'.split(' ').map(t => `<label><input type="checkbox"${t.endsWith('+') ? ' checked' : t.endsWith('-') ? ' disabled' : ''}>${t.replace(/[+-]/, '')}</label>`).join('')}</form>`);

const STAT = [['作業平面', 75], ['x -93.266', 88], ['y -95.072', 88], ['z 0.000', 88], ['ﾐﾘﾒｰﾄﾙ', 88], ['ドライヤー', 172, 'lay'], ['ｸﾞﾘｯﾄﾞｽﾅｯﾌﾟ', 94], ['直交ﾓｰﾄﾞ', 73], ['平面ﾓｰﾄﾞ', 73, 'on'], ['Osnap', 54, 'on'], ['ｽﾏｰﾄﾄﾗｯｸ', 74, 'on'], ['ｶﾞﾑﾎﾞｰﾙ', 72, 'on'], ['ﾋｽﾄﾘを記録', 94], ['ﾌｨﾙﾀ', 46]];
define('rh-status', () => `<style>
  :host{display:flex;height:21px;border-top:1px solid var(--edge);border-bottom:2px solid #0b3a5c;font:12px/16px var(--jp)}
  button{border-right:1px solid var(--edge)} .on{background:#e2f1fb;font-weight:700} .lay{justify-content:flex-start;padding-left:3px;font-feature-settings:"palt"} .lay::before{content:"";width:14px;height:14px;background:#000;margin-right:1px}
  p{margin:0;padding-left:3px;line-height:18px;white-space:nowrap}
  </style>${STAT.map(([t, w, c]) => `<button class="${c || ''}" style="flex:0 1 ${w}px">${t}</button>`).join('')}<p>ﾒﾓﾘ使用量: 560 MB</p>`);

define('rh-app', `<style>:host{display:flex;flex-direction:column;min-height:100vh;background:var(--bg)} main{flex:1;display:flex}</style>
  <rh-titlebar></rh-titlebar><rh-menubar></rh-menubar><rh-command></rh-command><rh-toolbars></rh-toolbars>
  <main><rh-sidetools></rh-sidetools><rh-center></rh-center><rh-dock></rh-dock></main><rh-osnap></rh-osnap><rh-status></rh-status>`);
</script>
</body>
</html>
